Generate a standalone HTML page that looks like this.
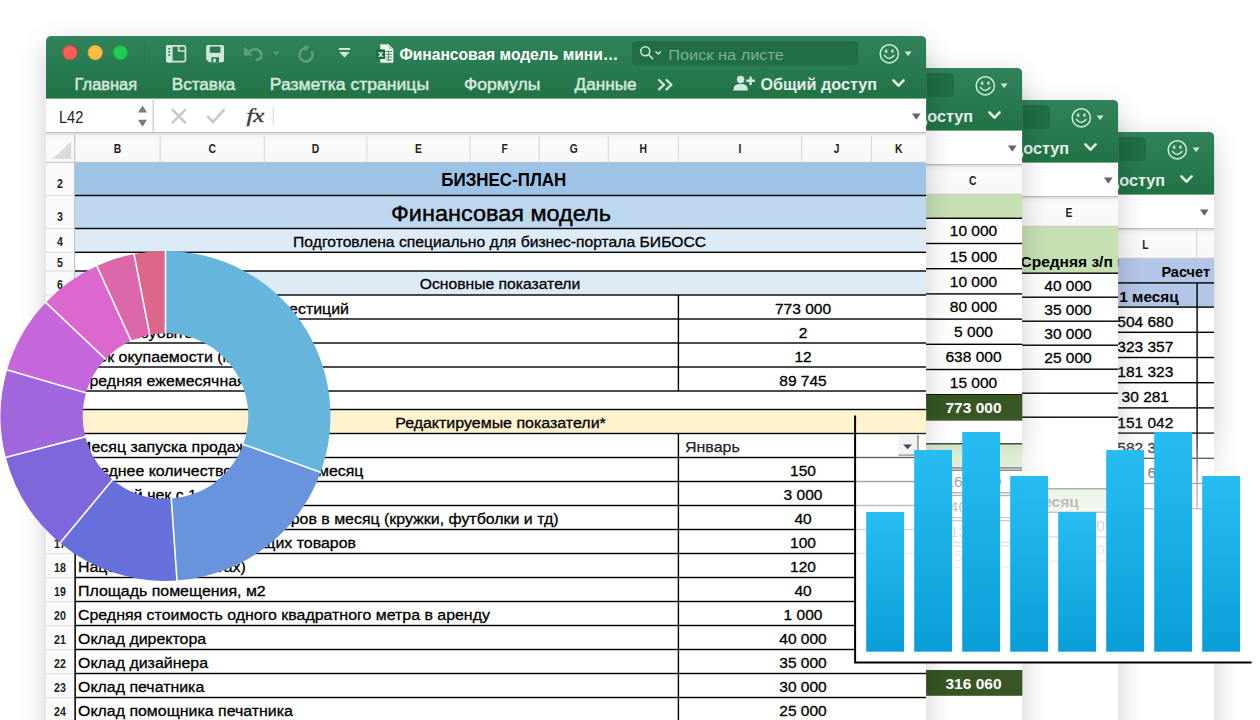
<!DOCTYPE html>
<html lang="ru"><head><meta charset="utf-8"><title>Финансовая модель</title>
<style>html,body{margin:0;padding:0;background:#fff;width:1260px;height:720px;overflow:hidden}svg{display:block}text{white-space:pre}</style>
</head><body>
<svg width="1260" height="720" viewBox="0 0 1260 720" font-family="'Liberation Sans', sans-serif">
<defs>
<linearGradient id="gr" x1="0" y1="0" x2="0" y2="1"><stop offset="0" stop-color="#30835a"/><stop offset="1" stop-color="#217346"/></linearGradient>
<linearGradient id="bar" x1="0" y1="0" x2="0" y2="1"><stop offset="0" stop-color="#27bdf3"/><stop offset="1" stop-color="#0a9ed8"/></linearGradient>
<linearGradient id="fade" x1="0" y1="0" x2="0" y2="1"><stop offset="0.000" stop-color="#fff" stop-opacity="0"/><stop offset="0.073" stop-color="#fff" stop-opacity="0.1"/><stop offset="0.130" stop-color="#fff" stop-opacity="0.25"/><stop offset="0.174" stop-color="#fff" stop-opacity="0.4"/><stop offset="0.223" stop-color="#fff" stop-opacity="0.52"/><stop offset="0.275" stop-color="#fff" stop-opacity="0.64"/><stop offset="0.381" stop-color="#fff" stop-opacity="0.76"/><stop offset="0.445" stop-color="#fff" stop-opacity="0.82"/><stop offset="0.538" stop-color="#fff" stop-opacity="0.9"/><stop offset="0.648" stop-color="#fff" stop-opacity="0.96"/><stop offset="0.749" stop-color="#fff" stop-opacity="1"/><stop offset="1.000" stop-color="#fff" stop-opacity="1"/></linearGradient>
<linearGradient id="hdr" x1="0" y1="0" x2="0" y2="1"><stop offset="0" stop-color="#f3f3f3"/><stop offset="0.25" stop-color="#fafafa"/><stop offset="1" stop-color="#f8f8f8"/></linearGradient>
<filter id="sh" x="-30%" y="-30%" width="160%" height="160%"><feGaussianBlur stdDeviation="15"/></filter>

<clipPath id="c0"><path d="M46.0,725 V41.5 q0,-5.5 5.5,-5.5 H920.8 q5.5,0 5.5,5.5 V725 z"/></clipPath>
<clipPath id="c1"><path d="M-458.0,725 V73.5 q0,-5.5 5.5,-5.5 H1016.8 q5.5,0 5.5,5.5 V725 z"/></clipPath>
<clipPath id="c2"><path d="M-362.0,725 V105.5 q0,-5.5 5.5,-5.5 H1112.8 q5.5,0 5.5,5.5 V725 z"/></clipPath>
<clipPath id="c3"><path d="M-266.0,725 V137.5 q0,-5.5 5.5,-5.5 H1208.8 q5.5,0 5.5,5.5 V725 z"/></clipPath>
</defs>
<rect width="1260" height="720" fill="#fff"/>
<rect x="1014.3" y="142.0" width="198" height="720" fill="#000" opacity="0.22" filter="url(#sh)"/>
<g clip-path="url(#c3)">
<rect x="1084.3" y="132.0" width="130.0" height="720" fill="#fff"/>
<rect x="1084.3" y="132.0" width="130.0" height="62.6" fill="url(#gr)"/>
<rect x="1084.3" y="137" width="61.700000000000045" height="24.5" rx="4.5" fill="#216d44"/>
<g fill="none" stroke="#d3e6da" stroke-width="1.5" stroke-linecap="round"><circle cx="1177.3" cy="149.8" r="9.1"/><path d="M1172.5,151.60000000000002 q4.8,5.6 9.6,0"/></g>
<ellipse cx="1174.2" cy="147.20000000000002" rx="1.1" ry="1.9" fill="#d3e6da"/><ellipse cx="1180.3999999999999" cy="147.20000000000002" rx="1.1" ry="1.9" fill="#d3e6da"/>
<path d="M1192.6,147.6 h7 l-3.5,4.4 z" fill="#d3e6da"/>
<text x="1048.4" y="185.6" font-size="16" font-weight="700" fill="#e3efe8" textLength="116.6" lengthAdjust="spacingAndGlyphs">Общий доступ</text>
<path d="M1181.4,176.4 l5.1,5.2 l5.1,-5.2" fill="none" stroke="#e3efe8" stroke-width="2.6" stroke-linecap="round" stroke-linejoin="round"/>
<path d="M1200,209.4 h8.6 l-4.3,6.4 z" fill="#666"/>
<rect x="1084.3" y="228" width="130.0" height="1.6" fill="#bdbdbd"/>
<rect x="1084.3" y="229.6" width="130.0" height="29" fill="url(#hdr)"/>
<rect x="1084.3" y="229.6" width="130.0" height="1.4" fill="#e3e3e3"/>
<rect x="1084.3" y="257.8" width="130.0" height="1.3" fill="#c6c6c6"/>
<text x="1145.3" y="249.3" font-size="12.3" font-weight="700" text-anchor="middle" fill="#222" textLength="6.3" lengthAdjust="spacingAndGlyphs">L</text>
<rect x="1196.10" y="229.5" width="1.2" height="29.0" fill="#d6d6d6"/>
<rect x="1108.3" y="258.9" width="120" height="48.200000000000045" fill="#b4c6e7"/>
<rect x="1108.3" y="282.20" width="106.0" height="1.4" fill="#000"/>
<text x="1161.4" y="277.3" font-size="15.5" font-weight="700" fill="#000" textLength="48.6" lengthAdjust="spacingAndGlyphs">Расчет</text>
<text x="1119.3" y="301.6" font-size="15.5" font-weight="700" fill="#000" textLength="59.5" lengthAdjust="spacingAndGlyphs">1 месяц</text>
<rect x="1108.3" y="306.40" width="106.0" height="1.4" fill="#000"/>
<rect x="1108.3" y="331.60" width="106.0" height="1.4" fill="#000"/>
<rect x="1108.3" y="356.80" width="106.0" height="1.4" fill="#000"/>
<rect x="1108.3" y="382.00" width="106.0" height="1.4" fill="#000"/>
<rect x="1108.3" y="407.20" width="106.0" height="1.4" fill="#000"/>
<rect x="1108.3" y="432.40" width="106.0" height="1.4" fill="#000"/>
<rect x="1108.3" y="457.60" width="106.0" height="1.4" fill="#000"/>
<rect x="1108.3" y="482.80" width="106.0" height="1.4" fill="#000"/>
<rect x="1108.3" y="508.00" width="106.0" height="1.4" fill="#000"/>
<text x="1145.3" y="326.7" font-size="15.5" text-anchor="middle" fill="#000" stroke="#000" stroke-width="0.3">504 680</text>
<text x="1145.3" y="351.9" font-size="15.5" text-anchor="middle" fill="#000" stroke="#000" stroke-width="0.3">323 357</text>
<text x="1145.3" y="377.1" font-size="15.5" text-anchor="middle" fill="#000" stroke="#000" stroke-width="0.3">181 323</text>
<text x="1145.3" y="402.3" font-size="15.5" text-anchor="middle" fill="#000" stroke="#000" stroke-width="0.3">30 281</text>
<text x="1145.3" y="427.5" font-size="15.5" text-anchor="middle" fill="#000" stroke="#000" stroke-width="0.3">151 042</text>
<text x="1145.3" y="452.7" font-size="15.5" text-anchor="middle" fill="#000" stroke="#000" stroke-width="0.3">582 367</text>
<text x="1145.3" y="477.9" font-size="15.5" text-anchor="middle" fill="#000" stroke="#000" stroke-width="0.3">209 617</text>
<rect x="1196.40" y="282.9" width="1.4" height="225.8" fill="#000"/>
</g>
<rect x="918.3" y="110.0" width="198" height="720" fill="#000" opacity="0.22" filter="url(#sh)"/>
<g clip-path="url(#c2)">
<rect x="988.3" y="100.0" width="130.0" height="720" fill="#fff"/>
<rect x="988.3" y="100.0" width="130.0" height="62.6" fill="url(#gr)"/>
<rect x="988.3" y="105" width="61.700000000000045" height="24.5" rx="4.5" fill="#216d44"/>
<g fill="none" stroke="#d3e6da" stroke-width="1.5" stroke-linecap="round"><circle cx="1081.3" cy="117.8" r="9.1"/><path d="M1076.5,119.6 q4.8,5.6 9.6,0"/></g>
<ellipse cx="1078.2" cy="115.2" rx="1.1" ry="1.9" fill="#d3e6da"/><ellipse cx="1084.3999999999999" cy="115.2" rx="1.1" ry="1.9" fill="#d3e6da"/>
<path d="M1096.6,115.6 h7 l-3.5,4.4 z" fill="#d3e6da"/>
<text x="952.4" y="153.6" font-size="16" font-weight="700" fill="#e3efe8" textLength="116.6" lengthAdjust="spacingAndGlyphs">Общий доступ</text>
<path d="M1085.4,144.4 l5.1,5.2 l5.1,-5.2" fill="none" stroke="#e3efe8" stroke-width="2.6" stroke-linecap="round" stroke-linejoin="round"/>
<path d="M1104,177.4 h8.6 l-4.3,6.4 z" fill="#666"/>
<rect x="988.3" y="196" width="130.0" height="1.6" fill="#bdbdbd"/>
<rect x="988.3" y="197.6" width="130.0" height="29" fill="url(#hdr)"/>
<rect x="988.3" y="197.6" width="130.0" height="1.4" fill="#e3e3e3"/>
<rect x="988.3" y="225.8" width="130.0" height="1.3" fill="#c6c6c6"/>
<text x="1069.0" y="217.3" font-size="12.3" font-weight="700" text-anchor="middle" fill="#222" textLength="6.9" lengthAdjust="spacingAndGlyphs">E</text>
<rect x="1012.3" y="226.3" width="120" height="46.89999999999998" fill="#c6e0b4"/>
<text x="1020.5" y="267.3" font-size="15.5" font-weight="700" fill="#000" textLength="115.4" lengthAdjust="spacingAndGlyphs">Средняя з/п по</text>
<rect x="1012.3" y="272.50" width="106.0" height="1.4" fill="#000"/>
<rect x="1012.3" y="296.50" width="106.0" height="1.4" fill="#000"/>
<rect x="1012.3" y="320.50" width="106.0" height="1.4" fill="#000"/>
<rect x="1012.3" y="344.50" width="106.0" height="1.4" fill="#000"/>
<rect x="1012.3" y="368.50" width="106.0" height="1.4" fill="#000"/>
<rect x="1012.3" y="392.50" width="106.0" height="1.4" fill="#000"/>
<rect x="1012.3" y="416.50" width="106.0" height="1.4" fill="#000"/>
<text x="1068.0" y="291.2" font-size="15.5" text-anchor="middle" fill="#000" stroke="#000" stroke-width="0.3">40 000</text>
<text x="1068.0" y="315.2" font-size="15.5" text-anchor="middle" fill="#000" stroke="#000" stroke-width="0.3">35 000</text>
<text x="1068.0" y="339.2" font-size="15.5" text-anchor="middle" fill="#000" stroke="#000" stroke-width="0.3">30 000</text>
<text x="1068.0" y="363.2" font-size="15.5" text-anchor="middle" fill="#000" stroke="#000" stroke-width="0.3">25 000</text>
<rect x="1012.3" y="489" width="120" height="23" fill="#c6e0b4"/>
<rect x="1012.3" y="488.10" width="106.0" height="1.4" fill="#000"/>
<rect x="1012.3" y="511.60" width="106.0" height="1.4" fill="#000"/>
<text x="1078.8" y="506.5" font-size="15.5" font-weight="700" text-anchor="end" fill="#000">месяц</text>
<text x="1105.0" y="531.0" font-size="15.5" text-anchor="end" fill="#000">30 000</text>
<rect x="1012.3" y="536.30" width="106.0" height="1.4" fill="#000"/>
<text x="1105.0" y="555.0" font-size="15.5" text-anchor="end" fill="#000">25 000</text>
<rect x="1012.3" y="560.30" width="106.0" height="1.4" fill="#000"/>
</g>
<rect x="822.3" y="78.0" width="198" height="720" fill="#000" opacity="0.22" filter="url(#sh)"/>
<g clip-path="url(#c1)">
<rect x="892.3" y="68.0" width="130.0" height="720" fill="#fff"/>
<rect x="892.3" y="68.0" width="130.0" height="62.6" fill="url(#gr)"/>
<rect x="892.3" y="73" width="61.700000000000045" height="24.5" rx="4.5" fill="#216d44"/>
<g fill="none" stroke="#d3e6da" stroke-width="1.5" stroke-linecap="round"><circle cx="985.3" cy="85.8" r="9.1"/><path d="M980.5,87.6 q4.8,5.6 9.6,0"/></g>
<ellipse cx="982.1999999999999" cy="83.2" rx="1.1" ry="1.9" fill="#d3e6da"/><ellipse cx="988.4" cy="83.2" rx="1.1" ry="1.9" fill="#d3e6da"/>
<path d="M1000.6,83.6 h7 l-3.5,4.4 z" fill="#d3e6da"/>
<text x="856.4" y="121.6" font-size="16" font-weight="700" fill="#e3efe8" textLength="116.6" lengthAdjust="spacingAndGlyphs">Общий доступ</text>
<path d="M989.4,112.4 l5.1,5.2 l5.1,-5.2" fill="none" stroke="#e3efe8" stroke-width="2.6" stroke-linecap="round" stroke-linejoin="round"/>
<path d="M1008,145.4 h8.6 l-4.3,6.4 z" fill="#666"/>
<rect x="892.3" y="164" width="130.0" height="1.6" fill="#bdbdbd"/>
<rect x="892.3" y="165.6" width="130.0" height="29" fill="url(#hdr)"/>
<rect x="892.3" y="165.6" width="130.0" height="1.4" fill="#e3e3e3"/>
<rect x="892.3" y="193.8" width="130.0" height="1.3" fill="#c6c6c6"/>
<text x="972.8" y="185.3" font-size="12.3" font-weight="700" text-anchor="middle" fill="#222" textLength="7.5" lengthAdjust="spacingAndGlyphs">C</text>
<rect x="916.3" y="194.6" width="120" height="23.700000000000017" fill="#c6e0b4"/>
<rect x="916.3" y="217.60" width="106.0" height="1.4" fill="#000"/>
<rect x="916.3" y="242.80" width="106.0" height="1.4" fill="#000"/>
<rect x="916.3" y="268.00" width="106.0" height="1.4" fill="#000"/>
<rect x="916.3" y="293.20" width="106.0" height="1.4" fill="#000"/>
<rect x="916.3" y="318.40" width="106.0" height="1.4" fill="#000"/>
<rect x="916.3" y="343.60" width="106.0" height="1.4" fill="#000"/>
<rect x="916.3" y="368.80" width="106.0" height="1.4" fill="#000"/>
<rect x="916.3" y="394.00" width="106.0" height="1.4" fill="#000"/>
<rect x="916.3" y="444.40" width="106.0" height="1.4" fill="#000"/>
<rect x="916.3" y="469.60" width="106.0" height="1.4" fill="#000"/>
<rect x="916.3" y="494.80" width="106.0" height="1.4" fill="#000"/>
<rect x="916.3" y="520.00" width="106.0" height="1.4" fill="#000"/>
<rect x="916.3" y="545.20" width="106.0" height="1.4" fill="#000"/>
<text x="973.5" y="236.3" font-size="15.5" text-anchor="middle" fill="#000" stroke="#000" stroke-width="0.3">10 000</text>
<text x="973.5" y="261.5" font-size="15.5" text-anchor="middle" fill="#000" stroke="#000" stroke-width="0.3">15 000</text>
<text x="973.5" y="286.7" font-size="15.5" text-anchor="middle" fill="#000" stroke="#000" stroke-width="0.3">10 000</text>
<text x="973.5" y="311.9" font-size="15.5" text-anchor="middle" fill="#000" stroke="#000" stroke-width="0.3">80 000</text>
<text x="973.5" y="337.1" font-size="15.5" text-anchor="middle" fill="#000" stroke="#000" stroke-width="0.3">5 000</text>
<text x="973.5" y="362.3" font-size="15.5" text-anchor="middle" fill="#000" stroke="#000" stroke-width="0.3">638 000</text>
<text x="973.5" y="387.5" font-size="15.5" text-anchor="middle" fill="#000" stroke="#000" stroke-width="0.3">15 000</text>
<rect x="916.3" y="394.70000000000005" width="120" height="25.999999999999932" fill="#375623"/>
<text x="973.5" y="412.9" font-size="15.5" font-weight="700" text-anchor="middle" fill="#fff">773 000</text>
<rect x="916.3" y="444" width="120" height="24" fill="#c6e0b4"/>
<rect x="916.3" y="443.10" width="106.0" height="1.4" fill="#000"/>
<rect x="916.3" y="467.30" width="106.0" height="1.4" fill="#000"/>
<text x="973.5" y="487.0" font-size="15.5" text-anchor="middle" fill="#000">165 009</text>
<rect x="916.3" y="492.10" width="106.0" height="1.4" fill="#000"/>
<text x="973.5" y="511.8" font-size="15.5" text-anchor="middle" fill="#000">40 000</text>
<rect x="916.3" y="516.90" width="106.0" height="1.4" fill="#000"/>
<text x="973.5" y="536.6" font-size="15.5" text-anchor="middle" fill="#000">13 000</text>
<rect x="916.3" y="541.70" width="106.0" height="1.4" fill="#000"/>
<text x="973.5" y="561.4" font-size="15.5" text-anchor="middle" fill="#000">5 000</text>
<rect x="916.3" y="566.50" width="106.0" height="1.4" fill="#000"/>
<rect x="916.3" y="670" width="120" height="25.8" fill="#375623"/>
<text x="973.5" y="689.0" font-size="15.5" font-weight="700" text-anchor="middle" fill="#fff">316 060</text>
</g>
<rect x="48.0" y="46.0" width="876.3" height="720" fill="#000" opacity="0.22" filter="url(#sh)"/>
<g clip-path="url(#c0)">
<rect x="46.0" y="36.0" width="880.3" height="720" fill="#fff"/>
<rect x="46.0" y="36.0" width="880.3" height="62.6" fill="url(#gr)"/>
<rect x="632" y="41" width="226" height="24.5" rx="4.5" fill="#216d44"/>
<g fill="none" stroke="#d3e6da" stroke-width="1.5" stroke-linecap="round"><circle cx="889.3" cy="53.8" r="9.1"/><path d="M884.5,55.599999999999994 q4.8,5.6 9.6,0"/></g>
<ellipse cx="886.1999999999999" cy="51.199999999999996" rx="1.1" ry="1.9" fill="#d3e6da"/><ellipse cx="892.4" cy="51.199999999999996" rx="1.1" ry="1.9" fill="#d3e6da"/>
<path d="M904.6,51.6 h7 l-3.5,4.4 z" fill="#d3e6da"/>
<text x="760.4" y="89.6" font-size="16" font-weight="700" fill="#e3efe8" textLength="116.6" lengthAdjust="spacingAndGlyphs">Общий доступ</text>
<path d="M893.4,80.4 l5.1,5.2 l5.1,-5.2" fill="none" stroke="#e3efe8" stroke-width="2.6" stroke-linecap="round" stroke-linejoin="round"/>
<path d="M912,113.4 h8.6 l-4.3,6.4 z" fill="#666"/>
<rect x="46.0" y="132" width="880.3" height="1.6" fill="#bdbdbd"/>
<rect x="46.0" y="133.6" width="880.3" height="29" fill="url(#hdr)"/>
<rect x="46.0" y="133.6" width="880.3" height="1.4" fill="#e3e3e3"/>
<rect x="46.0" y="161.8" width="880.3" height="1.3" fill="#c6c6c6"/>
<circle cx="69.9" cy="52.6" r="7.2" fill="#fd5c57" stroke="#d9453d" stroke-width="1"/>
<circle cx="95.2" cy="52.6" r="7.2" fill="#fdbe45" stroke="#d99f34" stroke-width="1"/>
<circle cx="120.4" cy="52.6" r="7.2" fill="#20cb52" stroke="#18a83d" stroke-width="1"/>
<rect x="143.80" y="45.0" width="1" height="18.0" fill="#29774f"/>
<g fill="none" stroke="#d3e6da" stroke-width="1.7" stroke-linejoin="round"><rect x="166.8" y="45.8" width="18.6" height="15.8" rx="1.6"/><path d="M178.6,46 v5 h6.4"/></g><rect x="166" y="45" width="6.6" height="17.4" rx="1.4" fill="#d3e6da"/>
<g fill="#2a7a50"><rect x="168.4" y="48" width="1.7" height="1.7"/><rect x="168.4" y="51" width="1.7" height="1.7"/><rect x="168.4" y="54" width="1.7" height="1.7"/></g>
<path d="M207.8,45 h14.4 q1.8,0 1.8,1.8 v13.6 q0,1.8 -1.8,1.8 h-13 l-3,-2.6 v-12.8 q0,-1.8 1.6,-1.8 z" fill="#d3e6da"/><rect x="209.8" y="46.6" width="10.6" height="6.2" fill="#287850"/><rect x="211.4" y="57.2" width="7.6" height="5" fill="#287850"/><rect x="213.2" y="58.6" width="2.6" height="3.6" fill="#d3e6da"/>
<path d="M244,46.6 v8.8 h8.8 z" fill="#5e9e7c"/><path d="M247.8,53 q4.6,-5.2 10,-3.2 q5,2.4 3.2,7.2 q-1.2,2.6 -4.4,3" fill="none" stroke="#5e9e7c" stroke-width="2.6" stroke-linecap="round"/>
<path d="M273,51.6 h6.2 l-3.1,4 z" fill="#5e9e7c"/>
<path d="M304.6,48.4 a6.6,6.6 0 1 0 7.4,3.6" fill="none" stroke="#5e9e7c" stroke-width="2.5" stroke-linecap="round"/><path d="M303.6,45.6 l6.2,1 l-4.2,5 z" fill="#5e9e7c"/>
<rect x="338.8" y="48" width="11.4" height="1.9" fill="#d3e6da"/><path d="M339.2,52 h10.6 l-5.3,5.6 z" fill="#d3e6da"/>
<path d="M380.5,44.4 h8 l4.6,4.6 v13.6 h-12.6 z" fill="#f4f8f5" stroke="#cfe0d5" stroke-width="0.6"/><path d="M388.5,44.4 v4.6 h4.6 z" fill="#b9d2c3"/>
<g stroke="#3d8a60" stroke-width="0.9"><path d="M385.4,51.5 h6.6 M385.4,54.3 h6.6 M385.4,57.1 h6.6 M385.4,59.9 h6.6 M388.7,50.4 v10.6"/></g>
<rect x="376.2" y="49.4" width="8.8" height="9.6" fill="#1d6a40"/>
<text x="380.6" y="57.4" font-size="9.5" font-weight="700" text-anchor="middle" fill="#fff">x</text>
<text x="399.4" y="59.8" font-size="16" font-weight="700" fill="#fff" textLength="219.0" lengthAdjust="spacingAndGlyphs">Финансовая модель мини…</text>
<g fill="none" stroke="#d3e6da" stroke-width="1.6" stroke-linecap="round"><circle cx="645.3" cy="51.2" r="4.5"/><path d="M648.8,54.8 l3.8,3.9"/><path d="M656,51.8 l2.3,2.2 l2.3,-2.2" stroke-width="1.5"/></g>
<text x="668.3" y="60.0" font-size="15" fill="#7db196" textLength="115.5" lengthAdjust="spacingAndGlyphs">Поиск на листе</text>
<text x="74.6" y="89.6" font-size="16" fill="#d6e8dd" textLength="62.5" lengthAdjust="spacingAndGlyphs" stroke="#d6e8dd" stroke-width="0.45">Главная</text>
<text x="171.8" y="89.6" font-size="16" fill="#d6e8dd" textLength="63.5" lengthAdjust="spacingAndGlyphs" stroke="#d6e8dd" stroke-width="0.45">Вставка</text>
<text x="269.8" y="89.6" font-size="16" fill="#d6e8dd" textLength="159.2" lengthAdjust="spacingAndGlyphs" stroke="#d6e8dd" stroke-width="0.45">Разметка страницы</text>
<text x="464.0" y="89.6" font-size="16" fill="#d6e8dd" textLength="76.3" lengthAdjust="spacingAndGlyphs" stroke="#d6e8dd" stroke-width="0.45">Формулы</text>
<text x="574.6" y="89.6" font-size="16" fill="#d6e8dd" textLength="62.0" lengthAdjust="spacingAndGlyphs" stroke="#d6e8dd" stroke-width="0.45">Данные</text>
<path d="M659,80 l5,4.7 l-5,4.7 M666.5,80 l5,4.7 l-5,4.7" fill="none" stroke="#d6e8dd" stroke-width="2.2" stroke-linecap="round" stroke-linejoin="round"/>
<circle cx="740.6" cy="79.4" r="3.7" fill="#d6e8dd"/><path d="M733.2,90.4 q0,-6.6 7.4,-6.6 q7.4,0 7.4,6.6 z" fill="#d6e8dd"/><path d="M750.6,76.4 v8.6 M746.3,80.7 h8.6" stroke="#d6e8dd" stroke-width="2.4" fill="none"/>
<text x="59.0" y="122.8" font-size="15.8" fill="#222" textLength="24.3" lengthAdjust="spacingAndGlyphs">L42</text>
<path d="M138,112.4 l4.5,-7 l4.5,7 z M138,119.8 l4.5,7 l4.5,-7 z" fill="#7a7a7a"/>
<rect x="152.55" y="98.5" width="1.3" height="33.5" fill="#d0d0d0"/>
<path d="M172.6,109.8 l12.6,12.8 M185.2,109.8 l-12.6,12.8" stroke="#c9c9c9" stroke-width="2.6" fill="none" stroke-linecap="round"/>
<path d="M207.8,116.6 l5,5.6 l11,-12" stroke="#c9c9c9" stroke-width="2.6" fill="none" stroke-linecap="round" stroke-linejoin="round"/>
<text x="246.4" y="121.8" font-family="'Liberation Serif', serif" font-style="italic" font-size="18.5" fill="#3c3c3c" stroke="#3c3c3c" stroke-width="0.35" textLength="18" lengthAdjust="spacingAndGlyphs">fx</text>
<rect x="272.70" y="107.0" width="1.2" height="18.0" fill="#dcdcdc"/>
<rect x="46" y="163" width="28.4" height="720" fill="#f9f9f9"/>
<rect x="74.00" y="135.0" width="1.2" height="585.0" fill="#c4c4c4"/>
<path d="M71.2,141.4 V159 H52.6 z" fill="#dadada"/>
<text x="117.6" y="153.3" font-size="12.3" font-weight="700" text-anchor="middle" fill="#222" textLength="7.5" lengthAdjust="spacingAndGlyphs">B</text>
<text x="212.2" y="153.3" font-size="12.3" font-weight="700" text-anchor="middle" fill="#222" textLength="7.5" lengthAdjust="spacingAndGlyphs">C</text>
<rect x="159.60" y="136.0" width="1.2" height="26.0" fill="#dadada"/>
<text x="315.5" y="153.3" font-size="12.3" font-weight="700" text-anchor="middle" fill="#222" textLength="7.5" lengthAdjust="spacingAndGlyphs">D</text>
<rect x="263.70" y="136.0" width="1.2" height="26.0" fill="#dadada"/>
<text x="418.4" y="153.3" font-size="12.3" font-weight="700" text-anchor="middle" fill="#222" textLength="6.9" lengthAdjust="spacingAndGlyphs">E</text>
<rect x="366.10" y="136.0" width="1.2" height="26.0" fill="#dadada"/>
<text x="504.6" y="153.3" font-size="12.3" font-weight="700" text-anchor="middle" fill="#222" textLength="6.3" lengthAdjust="spacingAndGlyphs">F</text>
<rect x="469.40" y="136.0" width="1.2" height="26.0" fill="#dadada"/>
<text x="573.8" y="153.3" font-size="12.3" font-weight="700" text-anchor="middle" fill="#222" textLength="8.0" lengthAdjust="spacingAndGlyphs">G</text>
<rect x="538.70" y="136.0" width="1.2" height="26.0" fill="#dadada"/>
<text x="643.3" y="153.3" font-size="12.3" font-weight="700" text-anchor="middle" fill="#222" textLength="7.5" lengthAdjust="spacingAndGlyphs">H</text>
<rect x="607.70" y="136.0" width="1.2" height="26.0" fill="#dadada"/>
<text x="740.0" y="153.3" font-size="12.3" font-weight="700" text-anchor="middle" fill="#222" textLength="2.9" lengthAdjust="spacingAndGlyphs">I</text>
<rect x="677.80" y="136.0" width="1.2" height="26.0" fill="#dadada"/>
<text x="836.5" y="153.3" font-size="12.3" font-weight="700" text-anchor="middle" fill="#222" textLength="5.7" lengthAdjust="spacingAndGlyphs">J</text>
<rect x="801.00" y="136.0" width="1.2" height="26.0" fill="#dadada"/>
<text x="898.8" y="153.3" font-size="12.3" font-weight="700" text-anchor="middle" fill="#222" textLength="7.5" lengthAdjust="spacingAndGlyphs">K</text>
<rect x="870.80" y="136.0" width="1.2" height="26.0" fill="#dadada"/>
<rect x="75" y="162.6" width="851.3" height="32.900000000000006" fill="#9dc3e6"/>
<rect x="75" y="195.5" width="851.3" height="33.0" fill="#bdd7ee"/>
<rect x="75" y="228.5" width="851.3" height="23.80000000000001" fill="#ddebf7"/>
<rect x="75" y="271" width="851.3" height="24" fill="#ddebf7"/>
<rect x="75" y="409.5" width="851.3" height="24.0" fill="#fff2cc"/>
<text x="60.0" y="187.9" font-size="12.3" font-weight="700" text-anchor="middle" fill="#222" textLength="5.9" lengthAdjust="spacingAndGlyphs">2</text>
<text x="60.0" y="220.7" font-size="12.3" font-weight="700" text-anchor="middle" fill="#222" textLength="5.9" lengthAdjust="spacingAndGlyphs">3</text>
<rect x="46.0" y="195.00" width="28.0" height="1" fill="#dedede"/>
<text x="60.0" y="245.6" font-size="12.3" font-weight="700" text-anchor="middle" fill="#222" textLength="5.9" lengthAdjust="spacingAndGlyphs">4</text>
<rect x="46.0" y="228.00" width="28.0" height="1" fill="#dedede"/>
<text x="60.0" y="266.6" font-size="12.3" font-weight="700" text-anchor="middle" fill="#222" textLength="5.9" lengthAdjust="spacingAndGlyphs">5</text>
<rect x="46.0" y="251.80" width="28.0" height="1" fill="#dedede"/>
<text x="60.0" y="288.8" font-size="12.3" font-weight="700" text-anchor="middle" fill="#222" textLength="5.9" lengthAdjust="spacingAndGlyphs">6</text>
<rect x="46.0" y="270.50" width="28.0" height="1" fill="#dedede"/>
<text x="60.0" y="313.4" font-size="12.3" font-weight="700" text-anchor="middle" fill="#222" textLength="5.9" lengthAdjust="spacingAndGlyphs">7</text>
<rect x="46.0" y="294.50" width="28.0" height="1" fill="#dedede"/>
<text x="60.0" y="337.4" font-size="12.3" font-weight="700" text-anchor="middle" fill="#222" textLength="5.9" lengthAdjust="spacingAndGlyphs">8</text>
<rect x="46.0" y="318.50" width="28.0" height="1" fill="#dedede"/>
<text x="60.0" y="361.4" font-size="12.3" font-weight="700" text-anchor="middle" fill="#222" textLength="5.9" lengthAdjust="spacingAndGlyphs">9</text>
<rect x="46.0" y="342.50" width="28.0" height="1" fill="#dedede"/>
<text x="60.0" y="385.4" font-size="12.3" font-weight="700" text-anchor="middle" fill="#222" textLength="11.8" lengthAdjust="spacingAndGlyphs">10</text>
<rect x="46.0" y="366.50" width="28.0" height="1" fill="#dedede"/>
<text x="60.0" y="403.9" font-size="12.3" font-weight="700" text-anchor="middle" fill="#222" textLength="11.2" lengthAdjust="spacingAndGlyphs">11</text>
<rect x="46.0" y="390.50" width="28.0" height="1" fill="#dedede"/>
<text x="60.0" y="427.9" font-size="12.3" font-weight="700" text-anchor="middle" fill="#222" textLength="11.8" lengthAdjust="spacingAndGlyphs">12</text>
<rect x="46.0" y="409.00" width="28.0" height="1" fill="#dedede"/>
<text x="60.0" y="451.9" font-size="12.3" font-weight="700" text-anchor="middle" fill="#222" textLength="11.8" lengthAdjust="spacingAndGlyphs">13</text>
<rect x="46.0" y="433.00" width="28.0" height="1" fill="#dedede"/>
<text x="60.0" y="475.9" font-size="12.3" font-weight="700" text-anchor="middle" fill="#222" textLength="11.8" lengthAdjust="spacingAndGlyphs">14</text>
<rect x="46.0" y="457.00" width="28.0" height="1" fill="#dedede"/>
<text x="60.0" y="499.9" font-size="12.3" font-weight="700" text-anchor="middle" fill="#222" textLength="11.8" lengthAdjust="spacingAndGlyphs">15</text>
<rect x="46.0" y="481.00" width="28.0" height="1" fill="#dedede"/>
<text x="60.0" y="523.9" font-size="12.3" font-weight="700" text-anchor="middle" fill="#222" textLength="11.8" lengthAdjust="spacingAndGlyphs">16</text>
<rect x="46.0" y="505.00" width="28.0" height="1" fill="#dedede"/>
<text x="60.0" y="547.9" font-size="12.3" font-weight="700" text-anchor="middle" fill="#222" textLength="11.8" lengthAdjust="spacingAndGlyphs">17</text>
<rect x="46.0" y="529.00" width="28.0" height="1" fill="#dedede"/>
<text x="60.0" y="571.9" font-size="12.3" font-weight="700" text-anchor="middle" fill="#222" textLength="11.8" lengthAdjust="spacingAndGlyphs">18</text>
<rect x="46.0" y="553.00" width="28.0" height="1" fill="#dedede"/>
<text x="60.0" y="595.9" font-size="12.3" font-weight="700" text-anchor="middle" fill="#222" textLength="11.8" lengthAdjust="spacingAndGlyphs">19</text>
<rect x="46.0" y="577.00" width="28.0" height="1" fill="#dedede"/>
<text x="60.0" y="619.9" font-size="12.3" font-weight="700" text-anchor="middle" fill="#222" textLength="11.8" lengthAdjust="spacingAndGlyphs">20</text>
<rect x="46.0" y="601.00" width="28.0" height="1" fill="#dedede"/>
<text x="60.0" y="643.9" font-size="12.3" font-weight="700" text-anchor="middle" fill="#222" textLength="11.8" lengthAdjust="spacingAndGlyphs">21</text>
<rect x="46.0" y="625.00" width="28.0" height="1" fill="#dedede"/>
<text x="60.0" y="667.9" font-size="12.3" font-weight="700" text-anchor="middle" fill="#222" textLength="11.8" lengthAdjust="spacingAndGlyphs">22</text>
<rect x="46.0" y="649.00" width="28.0" height="1" fill="#dedede"/>
<text x="60.0" y="691.9" font-size="12.3" font-weight="700" text-anchor="middle" fill="#222" textLength="11.8" lengthAdjust="spacingAndGlyphs">23</text>
<rect x="46.0" y="673.00" width="28.0" height="1" fill="#dedede"/>
<text x="60.0" y="715.9" font-size="12.3" font-weight="700" text-anchor="middle" fill="#222" textLength="11.8" lengthAdjust="spacingAndGlyphs">24</text>
<rect x="46.0" y="697.00" width="28.0" height="1" fill="#dedede"/>
<text x="60.0" y="739.9" font-size="12.3" font-weight="700" text-anchor="middle" fill="#222" textLength="11.8" lengthAdjust="spacingAndGlyphs">25</text>
<rect x="46.0" y="721.00" width="28.0" height="1" fill="#dedede"/>
<rect x="75.0" y="194.80" width="851.3" height="1.4" fill="#000"/>
<rect x="75.0" y="227.80" width="851.3" height="1.4" fill="#000"/>
<rect x="75.0" y="251.60" width="851.3" height="1.4" fill="#000"/>
<rect x="75.0" y="270.30" width="851.3" height="1.4" fill="#000"/>
<rect x="75.0" y="294.30" width="851.3" height="1.4" fill="#000"/>
<rect x="75.0" y="318.30" width="851.3" height="1.4" fill="#000"/>
<rect x="75.0" y="342.30" width="851.3" height="1.4" fill="#000"/>
<rect x="75.0" y="366.30" width="851.3" height="1.4" fill="#000"/>
<rect x="75.0" y="390.30" width="851.3" height="1.4" fill="#000"/>
<rect x="75.0" y="408.80" width="851.3" height="1.4" fill="#000"/>
<rect x="75.0" y="432.80" width="851.3" height="1.4" fill="#000"/>
<rect x="75.0" y="456.80" width="851.3" height="1.4" fill="#000"/>
<rect x="75.0" y="480.80" width="851.3" height="1.4" fill="#000"/>
<rect x="75.0" y="504.80" width="851.3" height="1.4" fill="#000"/>
<rect x="75.0" y="528.80" width="851.3" height="1.4" fill="#000"/>
<rect x="75.0" y="552.80" width="851.3" height="1.4" fill="#000"/>
<rect x="75.0" y="576.80" width="851.3" height="1.4" fill="#000"/>
<rect x="75.0" y="600.80" width="851.3" height="1.4" fill="#000"/>
<rect x="75.0" y="624.80" width="851.3" height="1.4" fill="#000"/>
<rect x="75.0" y="648.80" width="851.3" height="1.4" fill="#000"/>
<rect x="75.0" y="672.80" width="851.3" height="1.4" fill="#000"/>
<rect x="75.0" y="696.80" width="851.3" height="1.4" fill="#000"/>
<rect x="75.0" y="720.80" width="851.3" height="1.4" fill="#000"/>
<rect x="75.0" y="744.80" width="851.3" height="1.4" fill="#000"/>
<rect x="677.70" y="295.0" width="1.4" height="96.0" fill="#000"/>
<rect x="677.70" y="433.5" width="1.4" height="286.5" fill="#000"/>
<rect x="74.50" y="295.0" width="1.4" height="96.0" fill="#000"/>
<rect x="74.50" y="433.5" width="1.4" height="286.5" fill="#000"/>
<text x="503.8" y="186.3" font-size="18" font-weight="700" text-anchor="middle" fill="#000" textLength="125.0" lengthAdjust="spacingAndGlyphs">БИЗНЕС-ПЛАН</text>
<text x="501.0" y="221.2" font-size="22.5" text-anchor="middle" fill="#000" textLength="220.0" lengthAdjust="spacingAndGlyphs" stroke="#000" stroke-width="0.4">Финансовая модель</text>
<text x="499.6" y="246.7" font-size="15.5" text-anchor="middle" fill="#000" textLength="413.0" lengthAdjust="spacingAndGlyphs" stroke="#000" stroke-width="0.3">Подготовлена специально для бизнес-портала БИБОСС</text>
<text x="500.0" y="289.3" font-size="15.5" text-anchor="middle" fill="#000" textLength="160.6" lengthAdjust="spacingAndGlyphs" stroke="#000" stroke-width="0.3">Основные показатели</text>
<text x="500.5" y="427.6" font-size="15.5" text-anchor="middle" fill="#000" textLength="210.6" lengthAdjust="spacingAndGlyphs" stroke="#000" stroke-width="0.3">Редактируемые показатели*</text>
<text x="349.0" y="313.5" font-size="15.5" text-anchor="end" fill="#000" textLength="268.4" lengthAdjust="spacingAndGlyphs" stroke="#000" stroke-width="0.3">Сумма первоначальных инвестиций</text>
<text x="803.0" y="313.5" font-size="15.5" text-anchor="middle" fill="#000" stroke="#000" stroke-width="0.3">773 000</text>
<text x="78.0" y="337.5" font-size="15.5" fill="#000" textLength="212.0" lengthAdjust="spacingAndGlyphs" stroke="#000" stroke-width="0.3">Точка безубыточности (мес.)</text>
<text x="803.0" y="337.5" font-size="15.5" text-anchor="middle" fill="#000" stroke="#000" stroke-width="0.3">2</text>
<text x="78.0" y="361.5" font-size="15.5" fill="#000" textLength="182.0" lengthAdjust="spacingAndGlyphs" stroke="#000" stroke-width="0.3">Срок окупаемости (мес.)</text>
<text x="803.0" y="361.5" font-size="15.5" text-anchor="middle" fill="#000" stroke="#000" stroke-width="0.3">12</text>
<text x="78.0" y="385.5" font-size="15.5" fill="#000" textLength="236.6" lengthAdjust="spacingAndGlyphs" stroke="#000" stroke-width="0.3">Средняя ежемесячная прибыль</text>
<text x="803.0" y="385.5" font-size="15.5" text-anchor="middle" fill="#000" stroke="#000" stroke-width="0.3">89 745</text>
<text x="78.0" y="452.0" font-size="15.5" fill="#000" textLength="168.3" lengthAdjust="spacingAndGlyphs" stroke="#000" stroke-width="0.3">Месяц запуска продаж</text>
<text x="363.5" y="476.0" font-size="15.5" text-anchor="end" fill="#000" textLength="283.9" lengthAdjust="spacingAndGlyphs" stroke="#000" stroke-width="0.3">Среднее количество заказов за месяц</text>
<text x="803.0" y="476.0" font-size="15.5" text-anchor="middle" fill="#000" stroke="#000" stroke-width="0.3">150</text>
<text x="78.0" y="500.0" font-size="15.5" fill="#000" textLength="171.6" lengthAdjust="spacingAndGlyphs" stroke="#000" stroke-width="0.3">Средний чек с 1 заказа</text>
<text x="803.0" y="500.0" font-size="15.5" text-anchor="middle" fill="#000" stroke="#000" stroke-width="0.3">3 000</text>
<text x="558.5" y="524.0" font-size="15.5" text-anchor="end" fill="#000" textLength="509.1" lengthAdjust="spacingAndGlyphs" stroke="#000" stroke-width="0.3">Количество сопутствующих товаров в месяц (кружки, футболки и тд)</text>
<text x="803.0" y="524.0" font-size="15.5" text-anchor="middle" fill="#000" stroke="#000" stroke-width="0.3">40</text>
<text x="356.0" y="548.0" font-size="15.5" text-anchor="end" fill="#000" textLength="275.2" lengthAdjust="spacingAndGlyphs" stroke="#000" stroke-width="0.3">Средний чек сопутствующих товаров</text>
<text x="803.0" y="548.0" font-size="15.5" text-anchor="middle" fill="#000" stroke="#000" stroke-width="0.3">100</text>
<text x="78.0" y="572.0" font-size="15.5" fill="#000" textLength="167.8" lengthAdjust="spacingAndGlyphs" stroke="#000" stroke-width="0.3">Наценка (в процентах)</text>
<text x="803.0" y="572.0" font-size="15.5" text-anchor="middle" fill="#000" stroke="#000" stroke-width="0.3">120</text>
<text x="78.0" y="596.0" font-size="15.5" fill="#000" textLength="187.7" lengthAdjust="spacingAndGlyphs" stroke="#000" stroke-width="0.3">Площадь помещения, м2</text>
<text x="803.0" y="596.0" font-size="15.5" text-anchor="middle" fill="#000" stroke="#000" stroke-width="0.3">40</text>
<text x="78.0" y="620.0" font-size="15.5" fill="#000" textLength="411.9" lengthAdjust="spacingAndGlyphs" stroke="#000" stroke-width="0.3">Средняя стоимость одного квадратного метра в аренду</text>
<text x="803.0" y="620.0" font-size="15.5" text-anchor="middle" fill="#000" stroke="#000" stroke-width="0.3">1 000</text>
<text x="78.0" y="644.0" font-size="15.5" fill="#000" textLength="128.1" lengthAdjust="spacingAndGlyphs" stroke="#000" stroke-width="0.3">Оклад директора</text>
<text x="803.0" y="644.0" font-size="15.5" text-anchor="middle" fill="#000" stroke="#000" stroke-width="0.3">40 000</text>
<text x="78.0" y="668.0" font-size="15.5" fill="#000" textLength="130.0" lengthAdjust="spacingAndGlyphs" stroke="#000" stroke-width="0.3">Оклад дизайнера</text>
<text x="803.0" y="668.0" font-size="15.5" text-anchor="middle" fill="#000" stroke="#000" stroke-width="0.3">35 000</text>
<text x="78.0" y="692.0" font-size="15.5" fill="#000" textLength="126.3" lengthAdjust="spacingAndGlyphs" stroke="#000" stroke-width="0.3">Оклад печатника</text>
<text x="803.0" y="692.0" font-size="15.5" text-anchor="middle" fill="#000" stroke="#000" stroke-width="0.3">30 000</text>
<text x="78.0" y="716.0" font-size="15.5" fill="#000" textLength="214.9" lengthAdjust="spacingAndGlyphs" stroke="#000" stroke-width="0.3">Оклад помощника печатника</text>
<text x="803.0" y="716.0" font-size="15.5" text-anchor="middle" fill="#000" stroke="#000" stroke-width="0.3">25 000</text>
<text x="685.0" y="452.0" font-size="15.5" fill="#222" textLength="54.7" lengthAdjust="spacingAndGlyphs" stroke="#222" stroke-width="0.25">Январь</text>
<rect x="898.4" y="435.2" width="19.4" height="20.4" fill="#efefef"/><path d="M898.4,455.2 h19.6 v-20" fill="none" stroke="#555" stroke-width="1.3"/><path d="M903.2,444.6 h8.8 l-4.4,4.6 z" fill="#111"/>
</g>
<g>
<path d="M165.50,251.00 A165,165 0 0 1 320.55,472.43 L243.31,444.32 A82.8,82.8 0 0 0 165.50,333.20 z" fill="#66b5dc"/>
<path d="M320.55,472.43 A165,165 0 0 1 177.01,580.60 L171.28,498.60 A82.8,82.8 0 0 0 243.31,444.32 z" fill="#6794dc"/>
<path d="M177.01,580.60 A165,165 0 0 1 60.10,542.95 L112.61,479.71 A82.8,82.8 0 0 0 171.28,498.60 z" fill="#6670db"/>
<path d="M60.10,542.95 A165,165 0 0 1 5.76,457.31 L85.34,436.73 A82.8,82.8 0 0 0 112.61,479.71 z" fill="#7f67db"/>
<path d="M5.76,457.31 A165,165 0 0 1 7.05,369.97 L85.99,392.90 A82.8,82.8 0 0 0 85.34,436.73 z" fill="#a166db"/>
<path d="M7.05,369.97 A165,165 0 0 1 45.81,302.42 L105.44,359.00 A82.8,82.8 0 0 0 85.99,392.90 z" fill="#c567db"/>
<path d="M45.81,302.42 A165,165 0 0 1 96.81,265.98 L131.03,340.72 A82.8,82.8 0 0 0 105.44,359.00 z" fill="#dc67cf"/>
<path d="M96.81,265.98 A165,165 0 0 1 134.02,254.03 L149.70,334.72 A82.8,82.8 0 0 0 131.03,340.72 z" fill="#dc67ab"/>
<path d="M134.02,254.03 A165,165 0 0 1 165.50,251.00 L165.50,333.20 A82.8,82.8 0 0 0 149.70,334.72 z" fill="#dc6788"/>
</g>
<g stroke="#fff" stroke-width="1.6">
<path d="M165.50,250.50 L165.50,333.70"/>
<path d="M321.02,472.60 L242.84,444.15"/>
<path d="M177.04,581.10 L171.24,498.10"/>
<path d="M59.78,543.34 L112.93,479.32"/>
<path d="M5.27,457.44 L85.82,436.61"/>
<path d="M6.57,369.83 L86.47,393.04"/>
<path d="M45.45,302.08 L105.80,359.35"/>
<path d="M96.61,265.52 L131.24,341.17"/>
<path d="M133.92,253.54 L149.80,335.21"/>
</g>
<rect x="856" y="415" width="396" height="247" fill="url(#fade)"/>
<rect x="866.2" y="512" width="37.8" height="139.7" fill="url(#bar)"/>
<rect x="914.2" y="450" width="37.8" height="201.7" fill="url(#bar)"/>
<rect x="962.2" y="432" width="37.8" height="219.7" fill="url(#bar)"/>
<rect x="1010.2" y="476" width="37.8" height="175.7" fill="url(#bar)"/>
<rect x="1058.2" y="512" width="37.8" height="139.7" fill="url(#bar)"/>
<rect x="1106.2" y="450" width="37.8" height="201.7" fill="url(#bar)"/>
<rect x="1154.2" y="432" width="37.8" height="219.7" fill="url(#bar)"/>
<rect x="1202.2" y="476" width="37.8" height="175.7" fill="url(#bar)"/>
<path d="M855.1,415.5 V662.6 H1251.6" fill="none" stroke="#000" stroke-width="2"/>
</svg>
</body></html>
